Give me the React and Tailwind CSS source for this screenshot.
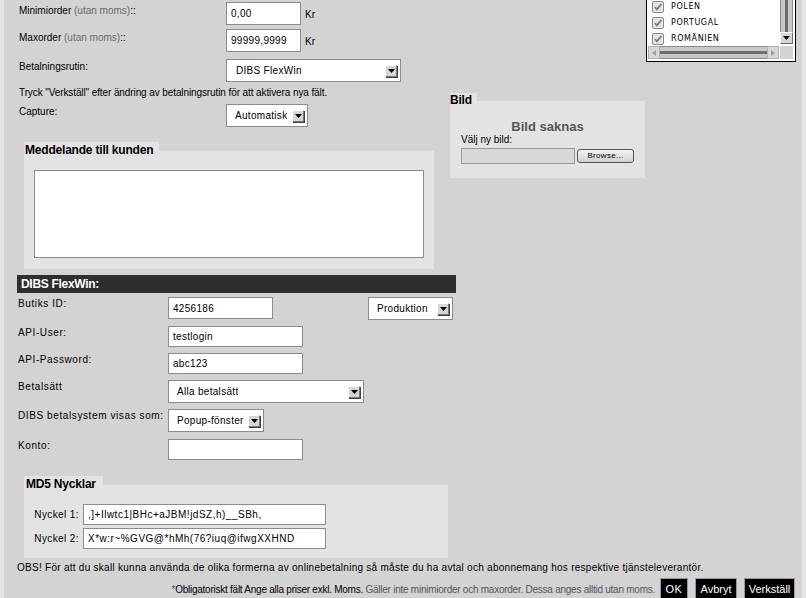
import React from "react";

const Arrow = () => (
  <div className="w-[12px] h-[12px] bg-[#d6d6d6] border border-t-white border-l-white border-r-[#7a7a7a] border-b-[#7a7a7a] flex items-center justify-center shadow-[1px_1px_0_#404040]">
    <svg width="7" height="4" viewBox="0 0 7 4"><path d="M0 0h7L3.5 4z" fill="#000" /></svg>
  </div>
);

const Select = ({ w, h = 23, text, pl = 9 }) => (
  <div
    className="bg-white border border-[#8c8c8c] flex items-center justify-between pr-[3px] shrink-0 text-[10px] tracking-[0.3px]"
    style={{ width: w, height: h, paddingLeft: pl }}
  >
    <span className="truncate">{text}</span>
    <Arrow />
  </div>
);

const Input = ({ w, h = 21, value = "", cls = "" }) => (
  <div
    className={"bg-white border border-[#8c8c8c] flex items-center pl-[4px] shrink-0 text-[10px] tracking-[0.3px] " + cls}
    style={{ width: w, height: h }}
  >
    {value}
  </div>
);

const Check = () => (
  <svg width="12" height="12" viewBox="0 0 12 12" className="shrink-0">
    <rect x="0.5" y="0.5" width="11" height="11" rx="1.5" fill="#e6e6e6" stroke="#8a8a8a" />
    <path d="M3 6.2l2 2.2L9.3 3" fill="none" stroke="#7a7a7a" strokeWidth="1.8" />
  </svg>
);

const TopRow = ({ label, children, mt, pt = 3 }) => (
  <div className="flex items-start" style={{ marginTop: mt }}>
    <div className="w-[207px] shrink-0 leading-[12px]" style={{ paddingTop: pt }}>{label}</div>
    {children}
  </div>
);

const DRow = ({ label, children, mt }) => (
  <div className="flex items-start" style={{ marginTop: mt }}>
    <div className="w-[150px] shrink-0 leading-[12px] pt-[1px] tracking-[0.6px]">{label}</div>
    {children}
  </div>
);

export default function App() {
  return (
    <div className="w-[806px] h-[598px] overflow-hidden bg-[#d3d3d3] flex font-['Liberation_Sans',Arial,sans-serif] text-[10px] text-black">
      <div className="w-[4px] shrink-0 bg-[#e4e4e4]" />
      <div className="w-[798px] shrink-0 flex flex-col">
        {/* top section */}
        <div className="flex items-start">
          <div className="w-[446px] shrink-0 pl-[15px]">
            <TopRow mt={2} label={<span>Minimiorder <span className="text-[#6a6a6a]">(utan moms)</span>::</span>}>
              <Input w={75} h={23} value="0,00" />
              <span className="ml-[4px] pt-[7px] leading-[12px]">Kr</span>
            </TopRow>
            <TopRow mt={4} label={<span>Maxorder <span className="text-[#6a6a6a]">(utan moms)</span>::</span>}>
              <Input w={75} h={23} value="99999,9999" />
              <span className="ml-[4px] pt-[7px] leading-[12px]">Kr</span>
            </TopRow>
            <TopRow mt={7} pt={2} label="Betalningsrutin:">
              <Select w={175} text="DIBS FlexWin" />
            </TopRow>
            <div className="mt-[5px] leading-[12px] tracking-[-0.1px]">
              Tryck "Verkställ" efter ändring av betalningsrutin för att aktivera nya fält.
            </div>
            <TopRow mt={5} pt={2} label="Capture:">
              <Select w={82} text="Automatisk" pl={8} />
            </TopRow>
            {/* Meddelande */}
            <div className="ml-[5px] mt-[15px] w-[410px] flex flex-col">
              <div className="w-fit bg-[#e3e3e3] pl-[1px] pr-[6px] font-bold text-[12px] leading-[14px] h-[9px] overflow-visible relative z-10 tracking-[-0.2px] pt-[1px]">
                Meddelande till kunden
              </div>
              <div className="bg-[#e3e3e3] pt-[19px] pb-[11px] pl-[10px]">
                <div className="w-[390px] h-[88px] bg-white border border-[#8c8c8c]" />
              </div>
            </div>
          </div>
          {/* Bild */}
          <div className="w-[195px] shrink-0 mt-[93px] flex flex-col">
            <div className="w-fit bg-[#e3e3e3] pr-[5px] font-bold text-[12px] leading-[14px] h-[8px] overflow-visible relative z-10 tracking-[-0.2px]">
              Bild
            </div>
            <div className="bg-[#e3e3e3] h-[77px] flex flex-col">
              <div className="text-center font-bold text-[13px] leading-[15px] text-[#555] mt-[18px]">Bild saknas</div>
              <div className="pl-[11px] leading-[12px] mt-[0px]">Välj ny bild:</div>
              <div className="flex items-center pl-[11px] mt-[2px]">
                <div className="w-[114px] h-[16px] bg-[#d8d8d8] border border-[#9a9a9a]" />
                <div className="ml-[2px] w-[57px] h-[14px] rounded-[3px] border border-[#555] bg-gradient-to-b from-[#f4f4f4] to-[#d0d0d0] text-[8px] leading-[12px] text-center tracking-[0.3px]">
                  Browse...
                </div>
              </div>
            </div>
          </div>
          {/* listbox */}
          <div className="ml-[1px] w-[150px] h-[62px] shrink-0 bg-white border-x border-b border-black relative">
            <div className="flex flex-col pl-[5px]">
              {["POLEN", "PORTUGAL", "ROMÄNIEN"].map((t, i) => (
                <div key={t} className="flex items-center h-[16px]" style={{ marginTop: i === 0 ? -1 : 0 }}>
                  <Check />
                  <span className="ml-[7px] tracking-[0.6px] leading-[10px] font-['DejaVu_Sans',sans-serif] text-[8px]">{t}</span>
                </div>
              ))}
            </div>
            {/* vertical scrollbar */}
            <div className="absolute right-[2px] top-0 w-[13px] h-[44px] flex flex-col">
              <div className="flex-1 bg-[#c8c8c8] border-x border-[#8a8a8a] flex justify-center">
                <div className="w-[3px] bg-[#6d6d6d]" />
              </div>
              <div className="h-[12px] bg-[#d6d6d6] border border-t-white border-l-white border-r-[#6d6d6d] border-b-[#6d6d6d] flex items-center justify-center">
                <svg width="7" height="4" viewBox="0 0 7 4"><path d="M0 0h7L3.5 4z" fill="#000" /></svg>
              </div>
            </div>
            <div className="absolute right-[2px] bottom-[2px] w-[13px] h-[13px] bg-[#d3d3d3]" />
            {/* horizontal scrollbar */}
            <div className="absolute left-[1px] bottom-[2px] w-[131px] h-[13px] flex items-stretch">
              <div className="w-[12px] bg-[#d8d8d8] border border-[#b0b0b0] flex items-center justify-center">
                <svg width="4" height="6" viewBox="0 0 4 6"><path d="M4 0v6L0 3z" fill="#a0a0a0" /></svg>
              </div>
              <div className="flex-1 bg-[#c8c8c8] border-y border-[#8a8a8a] flex flex-col justify-center">
                <div className="h-[3px] bg-[#6d6d6d]" />
              </div>
              <div className="w-[12px] bg-[#d8d8d8] border border-[#b0b0b0] flex items-center justify-center">
                <svg width="4" height="6" viewBox="0 0 4 6"><path d="M0 0v6L4 3z" fill="#a0a0a0" /></svg>
              </div>
            </div>
          </div>
        </div>

        {/* DIBS FlexWin */}
        <div className="ml-[13px] mt-[6px] w-[439px] h-[18px] bg-[#2e2e2e] text-white font-bold text-[12px] leading-[18px] pl-[4px] tracking-[-0.3px]">
          DIBS FlexWin:
        </div>
        <div className="ml-[14px]">
          <DRow mt={4} label="Butiks ID:">
            <Input w={105} h={22} value="4256186" />
            <div className="ml-[95px]"><Select w={85} text="Produktion" pl={8} /></div>
          </DRow>
          <DRow mt={6} label="API-User:">
            <Input w={135} h={21} value="testlogin" />
          </DRow>
          <DRow mt={6} label="API-Password:">
            <Input w={135} h={21} value="abc123" />
          </DRow>
          <DRow mt={6} label="Betalsätt">
            <Select w={196} h={23} text="Alla betalsätt" pl={8} />
          </DRow>
          <DRow mt={6} label="DIBS betalsystem visas som:">
            <Select w={96} h={23} text="Popup-fönster" pl={8} />
          </DRow>
          <DRow mt={7} label="Konto:">
            <Input w={135} h={21} value="" />
          </DRow>
        </div>

        {/* MD5 */}
        <div className="ml-[20px] mt-[16px] w-[424px] flex flex-col">
          <div className="w-fit bg-[#e3e3e3] pl-[2px] pr-[7px] font-bold text-[12px] leading-[14px] h-[9px] overflow-visible relative z-10 tracking-[-0.2px] pt-[1px]">
            MD5 Nycklar
          </div>
          <div className="bg-[#e3e3e3] h-[73px] pt-[19px]">
            <div className="flex items-center">
              <div className="w-[59px] text-right pr-[4px] tracking-[0.4px]">Nyckel 1:</div>
              <Input w={243} h={21} value=",]+Ilwtc1|BHc+aJBM!jdSZ,h)__SBh," cls="tracking-[0.5px]" />
            </div>
            <div className="flex items-center mt-[3px]">
              <div className="w-[59px] text-right pr-[4px] tracking-[0.4px]">Nyckel 2:</div>
              <Input w={243} h={21} value="X*w:r~%GVG@*hMh(76?iuq@ifwgXXHND" cls="tracking-[0.5px]" />
            </div>
          </div>
        </div>

        <div className="ml-[13px] mt-[4px] leading-[12px] tracking-[0.27px]">
          OBS! För att du skall kunna använda de olika formerna av onlinebetalning så måste du ha avtal och abonnemang hos respektive tjänsteleverantör.
        </div>

        <div className="flex items-start justify-end pr-[7px] mt-[4px]">
          <div className="leading-[12px] mt-[6px] mr-[5px] tracking-[-0.25px]">
            <span className="text-[#555]">*</span>Obligatoriskt fält Ange alla priser exkl. Moms.{" "}
            <span className="text-[#555]">Gäller inte minimiorder och maxorder. Dessa anges alltid utan moms.</span>
          </div>
          <div className="flex gap-[7px]">
            <div className="w-[28px] h-[22px] bg-black border border-[#9a9a9a] text-white text-[11px] leading-[20px] text-center tracking-[0.5px]">OK</div>
            <div className="w-[42px] h-[22px] bg-black border border-[#9a9a9a] text-white text-[11px] leading-[20px] text-center">Avbryt</div>
            <div className="w-[51px] h-[22px] bg-black border border-[#9a9a9a] text-white text-[11px] leading-[20px] text-center">Verkställ</div>
          </div>
        </div>
      </div>
      <div className="w-[4px] shrink-0 bg-[#e4e4e4]" />
    </div>
  );
}
